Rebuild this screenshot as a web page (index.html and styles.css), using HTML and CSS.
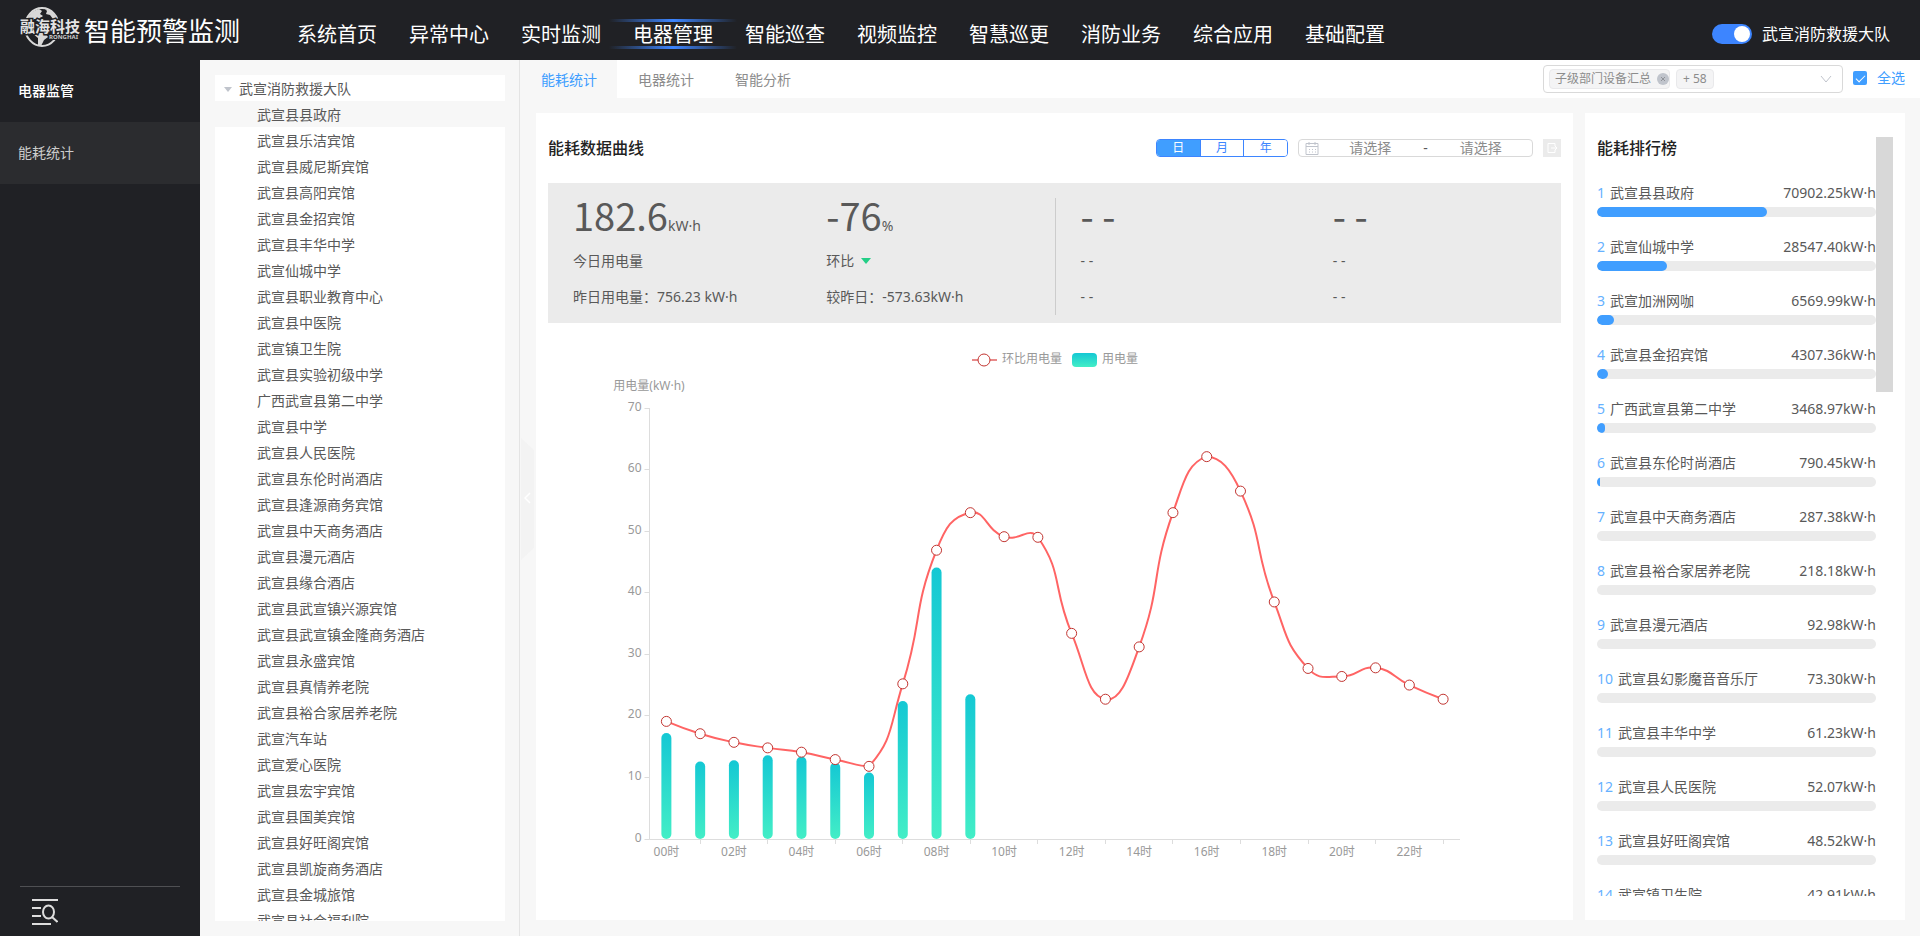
FILE: index.html
```html
<!DOCTYPE html>
<html lang="zh-CN">
<head>
    <meta charset="UTF-8">
    <meta name="viewport" content="width=device-width, initial-scale=1.0">
    <title>智能预警监测</title>
    <link rel="stylesheet" href="styles.css">
</head>
<body>
    <header class="header">
        <div class="brand">
            <svg class="logo" viewBox="0 0 60 44" width="60" height="44">
                <ellipse cx="22" cy="22" rx="17" ry="19" fill="none" stroke="#d8d8d8" stroke-width="2"/>
                <path d="M8 13c2-5 6-8 11-9l3 2-2 3 3 2-4 3-5 0-3 3zM25 4c6 1 10 5 12 11l-4-1-3-4-4-1 1-3z" fill="#d8d8d8"/>
                <path d="M12 28h13l3 4-4 3-3 6-3-1 0-7z" fill="#d8d8d8"/>
                <text class="logo-cn" x="0" y="27">融海科技</text>
                <text class="logo-en" x="29" y="34">RONGHAI</text>
            </svg>
            <span class="brand-name">智能预警监测</span>
        </div>
        <nav class="nav">
            <a href="#">系统首页</a>
            <a href="#">异常中心</a>
            <a href="#">实时监测</a>
            <a href="#" class="active">电器管理</a>
            <a href="#">智能巡查</a>
            <a href="#">视频监控</a>
            <a href="#">智慧巡更</a>
            <a href="#">消防业务</a>
            <a href="#">综合应用</a>
            <a href="#">基础配置</a>
        </nav>
        <label class="account">
            <input type="checkbox" class="switch" checked>
            <span>武宣消防救援大队</span>
        </label>
    </header>

    <div class="layout">
        <aside class="sidebar">
            <a href="#" class="side-item side-title">电器监管</a>
            <a href="#" class="side-item side-active">能耗统计</a>
            <div class="side-bottom">
                <button type="button" class="icon-button" aria-label="菜单搜索">
                    <svg viewBox="0 0 28 28" width="28" height="28" fill="none" stroke="#ddd" stroke-width="2">
                        <path d="M2 2h26M2 10h9M2 18h9M2 26h19"/>
                        <ellipse cx="18.500" cy="14" rx="5.500" ry="6.500"/>
                        <path d="M22 19l5.500 5"/>
                    </svg>
                </button>
            </div>
        </aside>

        <section class="tree-panel">
            <ul class="tree">
                <li class="tree-root">武宣消防救援大队</li>
                <li class="selected">武宣县县政府</li>
                <li>武宣县乐洁宾馆</li>
                <li>武宣县威尼斯宾馆</li>
                <li>武宣县高阳宾馆</li>
                <li>武宣县金招宾馆</li>
                <li>武宣县丰华中学</li>
                <li>武宣仙城中学</li>
                <li>武宣县职业教育中心</li>
                <li>武宣县中医院</li>
                <li>武宣镇卫生院</li>
                <li>武宣县实验初级中学</li>
                <li>广西武宣县第二中学</li>
                <li>武宣县中学</li>
                <li>武宣县人民医院</li>
                <li>武宣县东伦时尚酒店</li>
                <li>武宣县逢源商务宾馆</li>
                <li>武宣县中天商务酒店</li>
                <li>武宣县漫元酒店</li>
                <li>武宣县缘合酒店</li>
                <li>武宣县武宣镇兴源宾馆</li>
                <li>武宣县武宣镇金隆商务酒店</li>
                <li>武宣县永盛宾馆</li>
                <li>武宣县真情养老院</li>
                <li>武宣县裕合家居养老院</li>
                <li>武宣汽车站</li>
                <li>武宣爱心医院</li>
                <li>武宣县宏宇宾馆</li>
                <li>武宣县国美宾馆</li>
                <li>武宣县好旺阁宾馆</li>
                <li>武宣县凯旋商务酒店</li>
                <li>武宣县金城旅馆</li>
                <li>武宣县社会福利院</li>
            </ul>
        </section>

        <main class="main">
            <button type="button" class="collapse" aria-label="收起">
                <svg viewBox="0 0 8 12" width="8" height="12" fill="none" stroke="#fff" stroke-width="1.500"><path d="M6 1L1 6l5 5"/></svg>
            </button>
            <div class="tabbar">
                <div class="tabs">
                    <a href="#" class="tab tab-active">能耗统计</a>
                    <a href="#" class="tab">电器统计</a>
                    <a href="#" class="tab">智能分析</a>
                </div>
                <div class="filter">
                    <div class="multi-select">
                        <select aria-label="设备"><option></option></select>
                        <div class="tags">
                            <span class="tag">子级部门设备汇总
                                <svg viewBox="0 0 12 12" width="12" height="12"><circle cx="6" cy="6" r="6" fill="#c0c4cc"/><path d="M4 4l4 4M8 4l-4 4" stroke="#909399" fill="none"/></svg>
                            </span>
                            <span class="tag">+ 58</span>
                        </div>
                        <svg class="arrow" viewBox="0 0 12 8" width="12" height="8" fill="none" stroke="#c0c4cc"><path d="M1 1l5 6 5-6"/></svg>
                    </div>
                    <label class="check-all"><input type="checkbox" class="checkbox" checked>全选</label>
                </div>
            </div>

            <div class="cards">
                <section class="card chart-card">
                    <div class="card-head">
                        <h2>能耗数据曲线</h2>
                        <div class="tools">
                            <div class="period">
                                <button type="button" class="on">日</button>
                                <button type="button">月</button>
                                <button type="button">年</button>
                            </div>
                            <div class="date-range">
                                <svg viewBox="0 0 14 14" width="14" height="14" fill="none" stroke="#c0c4cc"><path d="M1 2.500h12v11h-12zM1 5.500h12M4 1v3M10 1v3M4 8.500h1M7 8.500h1M10 8.500h1M4 11h1M7 11h1M10 11h1"/></svg>
                                <input type="text" placeholder="请选择" aria-label="开始日期">
                                <span>-</span>
                                <input type="text" placeholder="请选择" aria-label="结束日期">
                            </div>
                            <button type="button" class="export" aria-label="导出">
                                <svg viewBox="0 0 12 12" width="12" height="12" fill="none" stroke="#fff"><path d="M9 4V1.500H2v9h7V8M5 6h6M9 4l2 2-2 2"/></svg>
                            </button>
                        </div>
                    </div>

                    <div class="stats">
                        <div class="stat">
                            <p class="value">182.6<small>kW·h</small></p>
                            <p>今日用电量</p>
                            <p>昨日用电量：756.23 kW·h</p>
                        </div>
                        <div class="stat">
                            <p class="value">-76<small>%</small></p>
                            <p>环比<i class="down"></i></p>
                            <p>较昨日：-573.63kW·h</p>
                        </div>
                        <div class="stat stat-split">
                            <p class="value">- -</p>
                            <p>- -</p>
                            <p>- -</p>
                        </div>
                        <div class="stat">
                            <p class="value">- -</p>
                            <p>- -</p>
                            <p>- -</p>
                        </div>
                    </div>

                    <svg class="chart" id="chart" viewBox="0 0 1013 560">
                        <defs>
                            <linearGradient id="barFill" x1="0" y1="0" x2="0" y2="1">
                                <stop offset="0" stop-color="#14c8d4"/>
                                <stop offset="1" stop-color="#43eec6"/>
                            </linearGradient>
                        </defs>
                        <path d="M424 37h25" stroke="#e88a8a" stroke-width="2"/>
                        <circle class="dot" cx="436" cy="37" r="6"/>
                        <text x="454" y="40">环比用电量</text>
                        <rect x="524" y="30" width="25" height="14" rx="4" fill="url(#barFill)"/>
                        <text x="554" y="40">用电量</text>
                        <text x="101" y="67" text-anchor="middle">用电量(kW·h)</text>
                    </svg>
                </section>

                <section class="card rank-card">
                    <div class="rank-body">
                        <h2>能耗排行榜</h2>
                        <ol class="rank" id="rank"></ol>
                    </div>
                    <div class="scroll-thumb"></div>
                </section>
            </div>
        </main>
    </div>

    <script>
        const NS = 'http://www.w3.org/2000/svg';
        const chart = document.getElementById('chart');

        // hourly values, kW·h
        const line = [19.1, 17.1, 15.7, 14.8, 14.1, 12.9, 11.8, 25.2, 46.9, 53, 49.1, 49, 33.4, 22.7, 31.2, 53, 62.1, 56.5, 38.5, 27.7, 26.4, 27.8, 25, 22.7];
        const bars = [17.2, 12.6, 12.8, 13.6, 13.4, 12.4, 10.8, 22.4, 44.1, 23.5];

        const x0 = 101.5, x1 = 912, y1 = 85, y0 = 516;
        const step = (x1 - x0) / 24;
        const px = i => x0 + step * (i + 0.5);
        const py = v => y0 - v * (y0 - y1) / 70;

        function draw(tag, attrs, text) {
            const el = document.createElementNS(NS, tag);
            for (const key in attrs) el.setAttribute(key, attrs[key]);
            if (text) el.textContent = text;
            chart.appendChild(el);
        }

        // Axes
        draw('path', { class: 'axis', d: `M${x0} ${y1}V${y0 + 0.5}H${x1}` });
        for (let v = 0; v <= 70; v += 10) {
            const y = Math.floor(py(v)) + 0.5;
            draw('path', { class: 'axis', d: `M${x0 - 5} ${y}H${x0}` });
            draw('text', { x: x0 - 8, y: y + 2, 'text-anchor': 'end' }, String(v));
        }
        for (let i = 0; i < 24; i++) {
            if (i % 2) {
                const x = Math.floor(px(i)) + 0.5;
                draw('path', { class: 'axis', d: `M${x} ${y0}v5` });
            } else {
                draw('text', { x: px(i), y: 533, 'text-anchor': 'middle' }, String(i).padStart(2, '0') + '时');
            }
        }

        bars.forEach((v, i) => {
            draw('rect', { x: px(i) - 5, y: py(v), width: 10, height: y0 - py(v), rx: 5, fill: 'url(#barFill)' });
        });

        // Smooth curve through the points
        const pts = line.map((v, i) => [px(i), py(v)]);
        const minY = Math.min(...pts.map(p => p[1]));
        const maxY = Math.max(...pts.map(p => p[1]));
        const clamp = y => Math.max(minY, Math.min(maxY, y));
        let d = `M${pts[0]}`;
        let cp = pts[0];
        for (let i = 1; i < pts.length; i++) {
            const p = pts[i], prev = pts[i - 1], next = pts[i + 1];
            if (!next) {
                d += `C${cp} ${p} ${p}`;
                break;
            }
            const a = Math.hypot(p[0] - prev[0], p[1] - prev[1]);
            const b = Math.hypot(p[0] - next[0], p[1] - next[1]);
            const r = b / (a + b);
            const vx = (next[0] - prev[0]) / 2, vy = (next[1] - prev[1]) / 2;
            d += `C${cp} ${p[0] - vx * (1 - r)},${clamp(p[1] - vy * (1 - r))} ${p}`;
            cp = [p[0] + vx * r, clamp(p[1] + vy * r)];
        }
        draw('path', { class: 'curve', d: d });
        pts.forEach(p => draw('circle', { class: 'dot', cx: p[0], cy: p[1], r: 5 }));

        // Ranking
        const rank = [
            ['武宣县县政府', '70902.25', 61],
            ['武宣仙城中学', '28547.40', 25],
            ['武宣加洲网咖', '6569.99', 6],
            ['武宣县金招宾馆', '4307.36', 4],
            ['广西武宣县第二中学', '3468.97', 3],
            ['武宣县东伦时尚酒店', '790.45', 1],
            ['武宣县中天商务酒店', '287.38', 0],
            ['武宣县裕合家居养老院', '218.18', 0],
            ['武宣县漫元酒店', '92.98', 0],
            ['武宣县幻影魔音音乐厅', '73.30', 0],
            ['武宣县丰华中学', '61.23', 0],
            ['武宣县人民医院', '52.07', 0],
            ['武宣县好旺阁宾馆', '48.52', 0],
            ['武宣镇卫生院', '42.91', 0]
        ];
        document.getElementById('rank').innerHTML = rank.map((r, i) => `
            <li>
                <div class="rank-text"><b>${i + 1}</b><span>${r[0]}</span><em>${r[1]}kW·h</em></div>
                <div class="track"><div class="fill" style="width: ${r[2]}%"></div></div>
            </li>`).join('');
    </script>
</body>
</html>
```
FILE: styles.css
```css
* {
    box-sizing: border-box;
}

body {
    margin: 0;
    height: 100vh;
    display: flex;
    flex-direction: column;
    overflow: hidden;
    font-family: "Noto Sans", "Noto Sans CJK SC", sans-serif;
    font-size: 14px;
    line-height: 20px;
    color: #595959;
    background-color: #f7f7f7;
}

a {
    color: inherit;
    text-decoration: none;
}

button,
input,
select {
    font: inherit;
    color: inherit;
    margin: 0;
    padding: 0;
}

h2 {
    margin: 0;
    font-size: 16px;
    line-height: 24px;
    font-weight: 500;
    color: #222;
}

p,
ul,
ol {
    margin: 0;
    padding: 0;
    list-style: none;
}

/* Header */
.header {
    height: 60px;
    flex: none;
    display: flex;
    align-items: center;
    padding: 0 30px 0 20px;
    background-color: #202125;
    color: #fff;
}

.brand {
    display: flex;
    align-items: center;
    gap: 4px;
    width: 261px;
    padding-bottom: 6px;
}

.brand-name {
    font-size: 26px;
    line-height: 36px;
    padding-top: 8px;
}

.logo-cn {
    font-size: 15px;
    font-weight: bold;
    fill: #e4e4e4;
    stroke: #202125;
    stroke-width: 3px;
    paint-order: stroke;
}

.logo-en {
    font-size: 6px;
    font-weight: bold;
    fill: #ccc;
    stroke: #202125;
    stroke-width: 2px;
    paint-order: stroke;
}

.nav {
    display: flex;
    flex: 1;
    padding-top: 8px;
}

.nav a {
    position: relative;
    padding: 2px 16px 0;
    font-size: 20px;
    line-height: 28px;
    white-space: nowrap;
}

.nav .active::before,
.nav .active::after {
    content: "";
    position: absolute;
    left: -8px;
    right: -8px;
    height: 3px;
    background: linear-gradient(to right, transparent, #3d85ff, transparent);
}

.nav .active::before {
    top: 0;
}

.nav .active::after {
    bottom: 0;
}

.account {
    display: flex;
    align-items: center;
    gap: 10px;
    padding-top: 8px;
    font-size: 16px;
}

.switch {
    appearance: none;
    position: relative;
    width: 40px;
    height: 20px;
    border-radius: 10px;
    background-color: #3d85ff;
}

.switch::after {
    content: "";
    position: absolute;
    top: 2px;
    right: 2px;
    width: 16px;
    height: 16px;
    border-radius: 50%;
    background-color: #fff;
}

.layout {
    flex: 1;
    min-height: 0;
    display: flex;
}

/* Sidebar */
.sidebar {
    width: 200px;
    flex: none;
    display: flex;
    flex-direction: column;
    background-color: #202125;
    color: #ccc;
}

.side-item {
    padding: 0 18px;
    line-height: 62px;
}

.side-title {
    color: #fff;
    font-weight: 500;
}

.side-active {
    background-color: #2b2c2f;
}

.side-bottom {
    margin: auto 20px 0;
    padding: 11px 10px 10px;
    border-top: 1px solid #4f5053;
}

.icon-button {
    display: block;
    border: 0;
    background: none;
}

.icon-button svg {
    display: block;
}

/* Tree */
.tree-panel {
    width: 320px;
    flex: none;
    padding: 15px 14px 15px 15px;
    border-right: 1px solid #e4e4e4;
}

.tree {
    height: 100%;
    overflow: hidden;
    background-color: #fff;
}

.tree li {
    height: 26px;
    padding: 2px 0 0 42px;
    line-height: 24px;
}

.tree .tree-root {
    display: flex;
    align-items: center;
    gap: 7px;
    padding-left: 9px;
}

.tree-root::before {
    content: "";
    border: 4px solid transparent;
    border-top: 5px solid #c0c4cc;
    border-bottom: 0;
}

.tree .selected {
    background-color: #f7f7f7;
}

/* Main */
.main {
    position: relative;
    flex: 1;
    min-width: 0;
    display: flex;
    flex-direction: column;
}

.collapse {
    position: absolute;
    left: 1px;
    top: 378px;
    width: 13px;
    height: 122px;
    border: 0;
    background-color: #f3f3f3;
    clip-path: polygon(0 0, 100% 12px, 100% 110px, 0 100%);
}

.tabbar {
    display: flex;
    justify-content: space-between;
    height: 38px;
    flex: none;
    background-color: #fff;
}

.tabs {
    display: flex;
}

.tab {
    padding: 0 20px 0 21px;
    line-height: 40px;
    color: #8c8c8c;
}

.tab-active {
    color: #409eff;
    background-color: #f7f7f7;
}

.filter {
    display: flex;
    gap: 10px;
    padding: 5px 15px 0 0;
}

.multi-select {
    position: relative;
    width: 300px;
    height: 28px;
}

.multi-select select {
    appearance: none;
    width: 100%;
    height: 100%;
    border: 1px solid #d9d9d9;
    border-radius: 4px;
    background-color: #fff;
}

.tags {
    position: absolute;
    left: 6px;
    top: 4px;
    display: flex;
    gap: 6px;
}

.tag {
    display: flex;
    align-items: center;
    gap: 6px;
    height: 20px;
    padding: 0 6px;
    border: 1px solid #e9e9eb;
    border-radius: 4px;
    font-size: 12px;
    color: #8c8c8c;
    background-color: #f4f4f5;
}

.tag:first-child {
    padding: 0 0 0 5px;
}

.arrow {
    position: absolute;
    right: 11px;
    top: 10px;
}

.check-all {
    display: flex;
    align-items: center;
    gap: 10px;
    height: 26px;
    color: #409eff;
}

.checkbox {
    appearance: none;
    position: relative;
    width: 14px;
    height: 14px;
    border-radius: 2px;
    background-color: #409eff;
}

.checkbox::after {
    content: "";
    position: absolute;
    left: 5px;
    top: 2px;
    width: 4px;
    height: 8px;
    border: solid #fff;
    border-width: 0 1px 1px 0;
    transform: rotate(45deg);
}

.cards {
    flex: 1;
    min-height: 0;
    display: flex;
    gap: 12px;
    padding: 15px 15px 16px 16px;
}

.card {
    background-color: #fff;
}

.chart-card {
    flex: 1;
    min-width: 0;
    padding: 23px 12px 0;
}

.card-head {
    display: flex;
    justify-content: space-between;
    align-items: center;
    height: 24px;
}

.tools {
    display: flex;
    gap: 10px;
    height: 18px;
}

.period {
    display: flex;
    width: 132px;
    border: 1px solid #3d85ff;
    border-radius: 4px;
    overflow: hidden;
}

.period button {
    flex: 1;
    border: 0;
    border-left: 1px solid #3d85ff;
    font-size: 12px;
    line-height: 16px;
    color: #3d85ff;
    background-color: #fff;
}

.period .on {
    border-left: 0;
    color: #fff;
    background-color: #409eff;
}

.date-range {
    display: flex;
    align-items: center;
    width: 235px;
    padding: 0 4px 0 6px;
    border: 1px solid #d9d9d9;
    border-radius: 4px;
}

.date-range svg {
    margin-right: 4px;
}

.date-range span {
    width: 16px;
    text-align: center;
}

.date-range input {
    flex: 1;
    min-width: 0;
    height: 16px;
    border: 0;
    text-align: center;
    background: none;
}

.date-range input::placeholder {
    color: #8c8c8c;
}

.export {
    display: flex;
    align-items: center;
    justify-content: center;
    width: 18px;
    border: 0;
    background-color: #ebebeb;
}

/* Stats */
.stats {
    display: grid;
    grid-template-columns: repeat(4, 1fr);
    margin-top: 23px;
    padding: 15px 0 8px;
    background-color: #ebebeb;
}

.stat {
    padding-left: 25px;
    height: 117px;
}

.stat p {
    line-height: 20px;
    margin-bottom: 16px;
}

.stat .value {
    height: 38px;
    font-family: "Noto Sans CJK SC", sans-serif;
    font-size: 38px;
    line-height: 34px;
    margin-bottom: 15px;
}

.stat-split {
    border-left: 1px solid #ccc;
}

.value small {
    font-family: "Noto Sans", sans-serif;
    font-size: 14px;
    line-height: 14px;
}

.down {
    display: inline-block;
    margin-left: 7px;
    border: 5px solid transparent;
    border-top: 6px solid #23ce86;
    border-bottom: 0;
    vertical-align: 2px;
}

/* Chart */
.chart {
    display: block;
    width: 100%;
}

.chart text {
    font-size: 12px;
    fill: #999;
}

.axis {
    fill: none;
    stroke: #ddd;
}

.curve {
    fill: none;
    stroke: #ff6464;
    stroke-width: 2;
}

.dot {
    fill: #fff;
    stroke: #c23531;
}

/* Ranking */
.rank-card {
    display: flex;
    width: 320px;
    flex: none;
    padding: 23px 12px 24px;
}

.rank-body {
    flex: 1;
    min-width: 0;
    overflow: hidden;
}

.rank {
    padding-top: 23px;
}

.rank li {
    height: 54px;
}

.rank-text {
    display: flex;
    gap: 5px;
    line-height: 20px;
}

.rank-text b {
    font-weight: normal;
    color: #66b1ff;
}

.rank-text em {
    margin-left: auto;
    font-style: normal;
}

.track {
    height: 10px;
    margin-top: 4px;
    border-radius: 5px;
    overflow: hidden;
    background-color: #ebebeb;
}

.fill {
    height: 100%;
    border-radius: 5px;
    background-color: #409eff;
}

.scroll-thumb {
    width: 17px;
    height: 255px;
    margin-top: 1px;
    background-color: #d8d8d8;
}
```
